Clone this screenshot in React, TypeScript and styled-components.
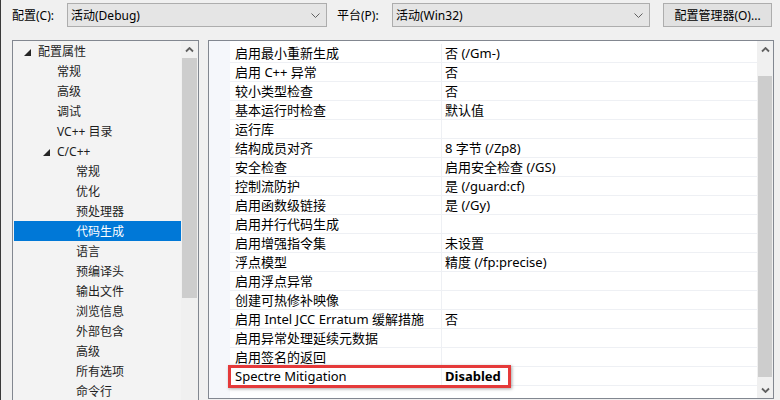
import styled, { createGlobalStyle } from "styled-components";

const GlobalStyle = createGlobalStyle`
  body {
    margin: 0;
    background: #f0f0f0;
  }
`

const Window = styled.div`
  width: 780px;
  height: 400px;
  overflow: hidden;
  box-sizing: border-box;
  border-left: 1px solid #3a3a3a;
  background: #f0f0f0;
  font-family: "Noto Sans", "Noto Sans CJK SC", sans-serif;
  color: #000;
`

const Toolbar = styled.div`
  display: flex;
  align-items: center;
  height: 30px;
  padding-left: 11px;
  font-size: 12px;
`

const Label = styled.span<{ $gap?: number }>`
  width: 55px;
  margin-left: ${p => p.$gap || 0}px;
  white-space: nowrap;
`

const Combo = styled.div<{ $w: number }>`
  width: ${p => p.$w}px;
  height: 24px;
  box-sizing: border-box;
  border: 1px solid #adadad;
  background: #e5e5e5;
  display: flex;
  align-items: center;
  justify-content: space-between;
  padding: 0 6px 0 3px;
`

const Button = styled.div`
  margin-left: 13px;
  width: 109px;
  height: 24px;
  box-sizing: border-box;
  border: 1px solid #adadad;
  background: #e1e1e1;
  display: flex;
  align-items: center;
  justify-content: center;
`

const Body = styled.div`
  display: flex;
  gap: 9px;
  margin-top: 10px;
  padding-left: 11px;
`

const TreeBox = styled.div`
  width: 187px;
  height: 380px;
  box-sizing: border-box;
  border: 1px solid #828790;
  background: #f3f3f3;
  display: flex;
`

const TreeList = styled.div`
  flex: 1;
  padding-left: 1px;
  font-size: 12px;
  color: #1e1e1e;
`

const TreeRow = styled.div<{ $level: number; $selected?: boolean }>`
  display: flex;
  align-items: center;
  height: 20px;
  padding-left: ${p => 10 + p.$level * 19}px;
  background: ${p => (p.$selected ? "#0078d7" : "transparent")};
  color: ${p => (p.$selected ? "#fff" : "inherit")};
  white-space: nowrap;
`

const Expander = styled.span`
  width: 14px;
  height: 20px;
  display: flex;
  align-items: center;
  padding-top: 2px;
  box-sizing: border-box;
  flex-shrink: 0;
`

const ScrollBar = styled.div<{ $w: number }>`
  width: ${p => p.$w}px;
  background: #f0f0f0;
  display: flex;
  flex-direction: column;
  flex-shrink: 0;
`

const ScrollBtn = styled.div`
  height: 17px;
  display: flex;
  align-items: center;
  justify-content: center;
  flex-shrink: 0;
`

const Track = styled.div<{ $offset: number }>`
  flex: 1;
  padding-top: ${p => p.$offset}px;
  display: flex;
  flex-direction: column;
`

const Thumb = styled.div<{ $h: number }>`
  height: ${p => p.$h}px;
  margin: 0 1px;
  background: #cdcdcd;
`

const GridPanel = styled.div`
  width: 566px;
  height: 359px;
  box-sizing: border-box;
  border: 1px solid #828790;
  background: #fff;
  display: flex;
`

const Gutter = styled.div`
  width: 21px;
  background: #f5f7fb;
  flex-shrink: 0;
`

const Rows = styled.div`
  flex: 1;
  padding-top: 3px;
  font-size: 13px;
`

const Row = styled.div`
  position: relative;
  display: grid;
  grid-template-columns: 212px 1fr;
  height: 19px;
  box-sizing: border-box;
  border-bottom: 1px solid #eef0f4;
  line-height: 18px;
`

const NameCell = styled.div`
  padding-left: 5px;
  border-right: 1px solid #eef0f4;
  white-space: nowrap;
`

const ValueCell = styled.div<{ $bold?: boolean }>`
  padding-left: 3px;
  font-weight: ${p => (p.$bold ? 700 : 400)};
  white-space: nowrap;
`

const Highlight = styled.div`
  position: absolute;
  left: -2px;
  top: -2px;
  width: 283px;
  height: 23px;
  box-sizing: border-box;
  border: 3px solid #e53a3a;
  box-shadow: 1px 1px 3px rgba(0, 0, 0, 0.35);
  pointer-events: none;
`

const Triangle = () => (
  <svg width="7" height="7" viewBox="0 0 7 7">
    <polygon points="7,0 7,7 0,7" fill="#262626" />
  </svg>
)

const Chevron = ({ down }: { down?: boolean }) => (
  <svg width="9" height="6" viewBox="0 0 9 6">
    <path
      d={down ? "M1 1.5 L4.5 5 L8 1.5" : "M1 4.5 L4.5 1 L8 4.5"}
      fill="none"
      stroke="#606060"
      strokeWidth="1.8"
    />
  </svg>
)

const ComboArrow = () => (
  <svg width="9" height="5" viewBox="0 0 9 5">
    <path d="M0.5 0.5 L4.5 4.5 L8.5 0.5" fill="none" stroke="#606060" strokeWidth="1" />
  </svg>
)

const tree = [
  { label: "配置属性", level: 0, expanded: true },
  { label: "常规", level: 1 },
  { label: "高级", level: 1 },
  { label: "调试", level: 1 },
  { label: "VC++ 目录", level: 1 },
  { label: "C/C++", level: 1, expanded: true },
  { label: "常规", level: 2 },
  { label: "优化", level: 2 },
  { label: "预处理器", level: 2 },
  { label: "代码生成", level: 2, selected: true },
  { label: "语言", level: 2 },
  { label: "预编译头", level: 2 },
  { label: "输出文件", level: 2 },
  { label: "浏览信息", level: 2 },
  { label: "外部包含", level: 2 },
  { label: "高级", level: 2 },
  { label: "所有选项", level: 2 },
  { label: "命令行", level: 2 },
]

const props = [
  ["启用最小重新生成", "否 (/Gm-)"],
  ["启用 C++ 异常", "否"],
  ["较小类型检查", "否"],
  ["基本运行时检查", "默认值"],
  ["运行库", ""],
  ["结构成员对齐", "8 字节 (/Zp8)"],
  ["安全检查", "启用安全检查 (/GS)"],
  ["控制流防护", "是 (/guard:cf)"],
  ["启用函数级链接", "是 (/Gy)"],
  ["启用并行代码生成", ""],
  ["启用增强指令集", "未设置"],
  ["浮点模型", "精度 (/fp:precise)"],
  ["启用浮点异常", ""],
  ["创建可热修补映像", ""],
  ["启用 Intel JCC Erratum 缓解措施", "否"],
  ["启用异常处理延续元数据", ""],
  ["启用签名的返回", ""],
  ["Spectre Mitigation", "Disabled"],
]

export default function App() {
  return (
    <Window>
      <GlobalStyle />
      <Toolbar>
        <Label>配置(C):</Label>
        <Combo $w={260}>
          <span>活动(Debug)</span>
          <ComboArrow />
        </Combo>
        <Label $gap={10}>平台(P):</Label>
        <Combo $w={258}>
          <span>活动(Win32)</span>
          <ComboArrow />
        </Combo>
        <Button>配置管理器(O)...</Button>
      </Toolbar>
      <Body>
        <TreeBox>
          <TreeList>
            {tree.map((item, i) => (
              <TreeRow key={i} $level={item.level} $selected={item.selected}>
                <Expander>{item.expanded && <Triangle />}</Expander>
                {item.label}
              </TreeRow>
            ))}
          </TreeList>
          <ScrollBar $w={17}>
            <ScrollBtn>
              <Chevron />
            </ScrollBtn>
            <Track $offset={0}>
              <Thumb $h={240} />
            </Track>
          </ScrollBar>
        </TreeBox>
        <GridPanel>
          <Gutter />
          <Rows>
            {props.map(([name, value], i) => {
              const last = i === props.length - 1
              return (
                <Row key={i}>
                  <NameCell>{name}</NameCell>
                  <ValueCell $bold={last}>{value}</ValueCell>
                  {last && <Highlight />}
                </Row>
              )
            })}
          </Rows>
          <ScrollBar $w={16}>
            <ScrollBtn>
              <Chevron />
            </ScrollBtn>
            <Track $offset={18}>
              <Thumb $h={301} />
            </Track>
            <ScrollBtn>
              <Chevron down />
            </ScrollBtn>
          </ScrollBar>
        </GridPanel>
      </Body>
    </Window>
  )
}
